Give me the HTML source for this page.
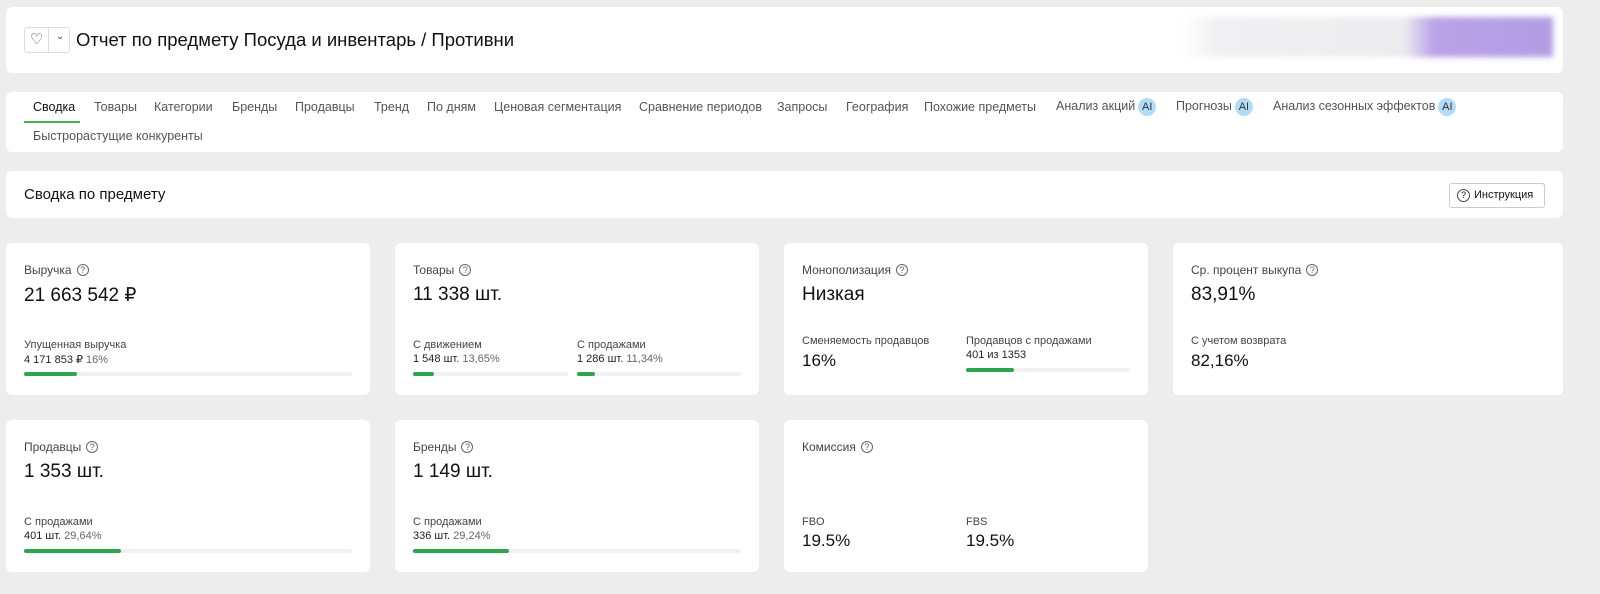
<!DOCTYPE html>
<html><head><meta charset="utf-8"><style>
*{box-sizing:border-box;margin:0;padding:0}
body{width:1600px;height:594px;background:#ededed;font-family:"Liberation Sans",Arial,sans-serif;color:#111;position:relative;overflow:hidden}
.card{position:absolute;background:#fff;border-radius:6px}
.abs{position:absolute;white-space:nowrap}
.tabs span{position:absolute;top:8px;font-size:12.5px;color:#555;white-space:nowrap}
.ai{display:inline-block;width:18px;height:18px;border-radius:9px;background:#b3dcf7;color:#333;font-size:11px;text-align:center;line-height:18px;margin-left:3px;font-style:normal}
.lbl{font-size:12px;color:#444}
.q{display:inline-block;width:12px;height:12px;border:1px solid #666;border-radius:50%;font-size:9px;line-height:10px;text-align:center;color:#666;margin-left:5px;vertical-align:1px}
.big{font-size:19px;color:#111}
.small{font-size:11px;color:#222}
.small i{font-style:normal;color:#666}
.bar{position:absolute;height:4px;background:#f1f1f1;border-radius:2px}
.bar b{display:block;height:4px;background:#2ea44f;border-radius:2px}
</style></head><body>
<div class="card" style="left:6px;top:7px;width:1557px;height:66px">
 <div class="abs" style="left:18px;top:20px;width:46px;height:26px;border:1px solid #ddd;border-radius:3px"></div>
 <div class="abs" style="left:42px;top:20px;width:1px;height:26px;background:#ddd"></div>
 <div class="abs" style="left:24px;top:23px;font-size:15px;color:#444">♡</div>
 <div class="abs" style="left:50px;top:24px;font-size:10px;color:#444">⌄</div>
 <div class="abs" style="left:70px;top:22px;font-size:18.5px">Отчет по предмету Посуда и инвентарь / Противни</div>
 <div class="abs" style="left:1175px;top:10px;width:372px;height:40px;background:linear-gradient(90deg,#fff 0%,#f0f0f2 10%,#ececee 60%,#b9a2e6 68%,#b29de4 100%);filter:blur(3px)"></div>
</div>
<div class="card tabs" style="left:6px;top:92px;width:1557px;height:60px">
 <span style="left:27px;color:#111">Сводка</span>
 <div class="abs" style="left:18px;top:29px;width:56px;height:2px;background:#4caf50"></div>
 <span style="left:88px">Товары</span><span style="left:148px">Категории</span><span style="left:226px">Бренды</span><span style="left:289px">Продавцы</span><span style="left:368px">Тренд</span><span style="left:421px">По дням</span><span style="left:488px">Ценовая сегментация</span><span style="left:633px">Сравнение периодов</span><span style="left:771px">Запросы</span><span style="left:840px">География</span><span style="left:918px">Похожие предметы</span>
 <span style="left:1050px;top:6px">Анализ акций<i class="ai">AI</i></span><span style="left:1170px;top:6px">Прогнозы<i class="ai">AI</i></span><span style="left:1267px;top:6px">Анализ сезонных эффектов<i class="ai">AI</i></span>
 <span style="left:27px;top:37px">Быстрорастущие конкуренты</span>
</div>
<div class="card" style="left:6px;top:171px;width:1557px;height:47px">
 <div class="abs" style="left:18px;top:15px;font-size:15px">Сводка по предмету</div>
 <div class="abs" style="left:1443px;top:12px;width:96px;height:25px;border:1px solid #ccc;border-radius:3px;font-size:11px;line-height:23px;padding-left:24px">Инструкция</div>
 <div class="abs" style="left:1451px;top:18px;width:13px;height:13px;border:1px solid #444;border-radius:50%;font-size:9px;line-height:11px;text-align:center">?</div>
</div>

<div class="card" style="left:6px;top:243px;width:364px;height:152px">
 <div class="abs lbl" style="left:18px;top:20px">Выручка<span class="q">?</span></div>
 <div class="abs big" style="left:18px;top:41px">21 663 542 ₽</div>
 <div class="abs lbl" style="left:18px;top:96px;font-size:11px">Упущенная выручка</div>
 <div class="abs small" style="left:18px;top:110px">4 171 853 ₽ <i>16%</i></div>
 <div class="bar" style="left:18px;top:129px;width:328px"><b style="width:53px"></b></div>
</div>
<div class="card" style="left:395px;top:243px;width:364px;height:152px">
 <div class="abs lbl" style="left:18px;top:20px">Товары<span class="q">?</span></div>
 <div class="abs big" style="left:18px;top:41px">11 338 шт.</div>
 <div class="abs lbl" style="left:18px;top:96px;font-size:11px">С движением</div>
 <div class="abs small" style="left:18px;top:110px">1 548 шт. <i>13,65%</i></div>
 <div class="bar" style="left:18px;top:129px;width:155px"><b style="width:21px"></b></div>
 <div class="abs lbl" style="left:182px;top:96px;font-size:11px">С продажами</div>
 <div class="abs small" style="left:182px;top:110px">1 286 шт. <i>11,34%</i></div>
 <div class="bar" style="left:182px;top:129px;width:164px"><b style="width:18px"></b></div>
</div>
<div class="card" style="left:784px;top:243px;width:364px;height:152px">
 <div class="abs lbl" style="left:18px;top:20px">Монополизация<span class="q">?</span></div>
 <div class="abs big" style="left:18px;top:41px">Низкая</div>
 <div class="abs lbl" style="left:18px;top:92px;font-size:11px">Сменяемость продавцов</div>
 <div class="abs" style="left:18px;top:108px;font-size:17px">16%</div>
 <div class="abs lbl" style="left:182px;top:92px;font-size:11px">Продавцов с продажами</div>
 <div class="abs small" style="left:182px;top:106px">401 из 1353</div>
 <div class="bar" style="left:182px;top:125px;width:164px"><b style="width:48px"></b></div>
</div>
<div class="card" style="left:1173px;top:243px;width:390px;height:152px">
 <div class="abs lbl" style="left:18px;top:20px">Ср. процент выкупа<span class="q">?</span></div>
 <div class="abs big" style="left:18px;top:41px">83,91%</div>
 <div class="abs lbl" style="left:18px;top:92px;font-size:11px">С учетом возврата</div>
 <div class="abs" style="left:18px;top:108px;font-size:17px">82,16%</div>
</div>

<div class="card" style="left:6px;top:420px;width:364px;height:152px">
 <div class="abs lbl" style="left:18px;top:20px">Продавцы<span class="q">?</span></div>
 <div class="abs big" style="left:18px;top:41px">1 353 шт.</div>
 <div class="abs lbl" style="left:18px;top:96px;font-size:11px">С продажами</div>
 <div class="abs small" style="left:18px;top:110px">401 шт. <i>29,64%</i></div>
 <div class="bar" style="left:18px;top:129px;width:328px"><b style="width:97px"></b></div>
</div>
<div class="card" style="left:395px;top:420px;width:364px;height:152px">
 <div class="abs lbl" style="left:18px;top:20px">Бренды<span class="q">?</span></div>
 <div class="abs big" style="left:18px;top:41px">1 149 шт.</div>
 <div class="abs lbl" style="left:18px;top:96px;font-size:11px">С продажами</div>
 <div class="abs small" style="left:18px;top:110px">336 шт. <i>29,24%</i></div>
 <div class="bar" style="left:18px;top:129px;width:328px"><b style="width:96px"></b></div>
</div>
<div class="card" style="left:784px;top:420px;width:364px;height:152px">
 <div class="abs lbl" style="left:18px;top:20px">Комиссия<span class="q">?</span></div>
 <div class="abs lbl" style="left:18px;top:96px;font-size:11px">FBO</div>
 <div class="abs" style="left:18px;top:111px;font-size:17px">19.5%</div>
 <div class="abs lbl" style="left:182px;top:96px;font-size:11px">FBS</div>
 <div class="abs" style="left:182px;top:111px;font-size:17px">19.5%</div>
</div>
</body></html>
